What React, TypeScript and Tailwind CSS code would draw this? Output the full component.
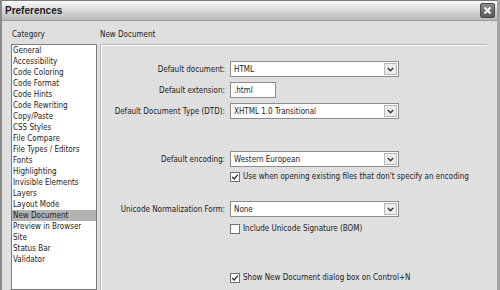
import React from 'react';

const categories = [
  'General',
  'Accessibility',
  'Code Coloring',
  'Code Format',
  'Code Hints',
  'Code Rewriting',
  'Copy/Paste',
  'CSS Styles',
  'File Compare',
  'File Types / Editors',
  'Fonts',
  'Highlighting',
  'Invisible Elements',
  'Layers',
  'Layout Mode',
  'New Document',
  'Preview in Browser',
  'Site',
  'Status Bar',
  'Validator',
];

const Chevron = () => (
  <svg width="7" height="5" viewBox="0 0 7 5">
    <path d="M0.8 1 L3.5 3.7 L6.2 1" fill="none" stroke="#333" strokeWidth="1.4" />
  </svg>
);

const Select = ({ value }: { value: string }) => (
  <div className="flex h-[16px] w-[169px] items-center border border-[#8c8c8c] bg-white">
    <span className="flex-1 truncate pl-[3px]">{value}</span>
    <div className="mr-[1px] flex h-[12px] w-[13px] items-center justify-center border border-[#b9b9b9] bg-[#ececec]">
      <Chevron />
    </div>
  </div>
);

const Check = ({ checked, label }: { checked: boolean; label: string }) => (
  <div className="flex items-center gap-[3px] pl-[128px]">
    <div className="flex h-[10px] w-[10px] items-center justify-center border border-[#707070] bg-white">
      {checked && (
        <svg width="8" height="8" viewBox="0 0 8 8">
          <path d="M1.2 4 L3.2 6 L6.8 1.6" fill="none" stroke="#2a2a2a" strokeWidth="1.3" />
        </svg>
      )}
    </div>
    <span>{label}</span>
  </div>
);

const Row = ({ label, children }: { label: string; children: React.ReactNode }) => (
  <div className="flex items-center gap-[5px]">
    <span className="w-[123px] text-right">{label}</span>
    {children}
  </div>
);

export default function App() {
  return (
    <div
      className="flex h-[290px] w-[500px] flex-col overflow-hidden border-l-2 border-r-[3px] border-l-[#8a8a8a] border-r-[#a4a4a4] bg-[#dfdfdf] text-[8px] leading-[11px] text-[#1c1c1c]"
      style={{ fontFamily: '"DejaVu Sans Condensed", "Liberation Sans", sans-serif' }}
    >
      {/* Title bar */}
      <div className="flex h-[21px] shrink-0 items-center justify-between border-t border-b border-t-[#7a7a7a] border-b-[#9a9a9a] bg-gradient-to-b from-[#fbfbfb] via-[#d9d9d9] to-[#b9b9b9] pl-[3px] pr-[2px]">
        <span
          className="text-[10px] font-bold text-[#1a1a1a]"
          style={{ fontFamily: '"Liberation Sans", Arial, sans-serif' }}
        >
          Preferences
        </span>
        <div className="flex h-[15px] w-[15px] items-center justify-center rounded-[2px] border border-[#4a4a4a] bg-gradient-to-b from-[#8a8a8a] to-[#5a5a5a]">
          <svg width="9" height="9" viewBox="0 0 9 9">
            <path d="M1.5 1.5 L7.5 7.5 M7.5 1.5 L1.5 7.5" stroke="#fff" strokeWidth="1.8" />
          </svg>
        </div>
      </div>

      {/* Body */}
      <div className="flex flex-1 pl-[9px] pr-[10px]">
        <div className="flex w-[86px] flex-col">
          <div className="mt-[8px] h-[15px] pl-[1px]">Category</div>
          <div className="flex-1 border border-[#7c7c7c] bg-white">
            {categories.map((c) => (
              <div
                key={c}
                className={`h-[11px] pl-[1px] whitespace-nowrap ${c === 'New Document' ? 'bg-[#b3b3b3]' : ''}`}
              >
                {c}
              </div>
            ))}
          </div>
        </div>

        <div className="ml-[3px] flex flex-1 flex-col">
          <div className="mt-[8px] h-[15px]">New Document</div>
          <div className="flex flex-1 flex-col border-t border-l border-t-[#b2b2b2] border-l-[#b9b9b9]">
            <div className="flex flex-1 flex-col border-t border-l border-white">
              <div className="mt-[15px]">
                <Row label="Default document:">
                  <Select value="HTML" />
                </Row>
              </div>
              <div className="mt-[5px]">
                <Row label="Default extension:">
                  <div className="flex h-[16px] w-[46px] items-center border border-[#8c8c8c] bg-white pl-[3px]">.html</div>
                </Row>
              </div>
              <div className="mt-[5px]">
                <Row label="Default Document Type (DTD):">
                  <Select value="XHTML 1.0 Transitional" />
                </Row>
              </div>
              <div className="mt-[32px]">
                <Row label="Default encoding:">
                  <Select value="Western European" />
                </Row>
              </div>
              <div className="mt-[4px]">
                <Check checked label="Use when opening existing files that don't specify an encoding" />
              </div>
              <div className="mt-[19px]">
                <Row label="Unicode Normalization Form:">
                  <Select value="None" />
                </Row>
              </div>
              <div className="mt-[6px]">
                <Check checked={false} label="Include Unicode Signature (BOM)" />
              </div>
              <div className="mt-[38px]">
                <Check checked label="Show New Document dialog box on Control+N" />
              </div>
            </div>
          </div>
        </div>
      </div>
    </div>
  );
}
